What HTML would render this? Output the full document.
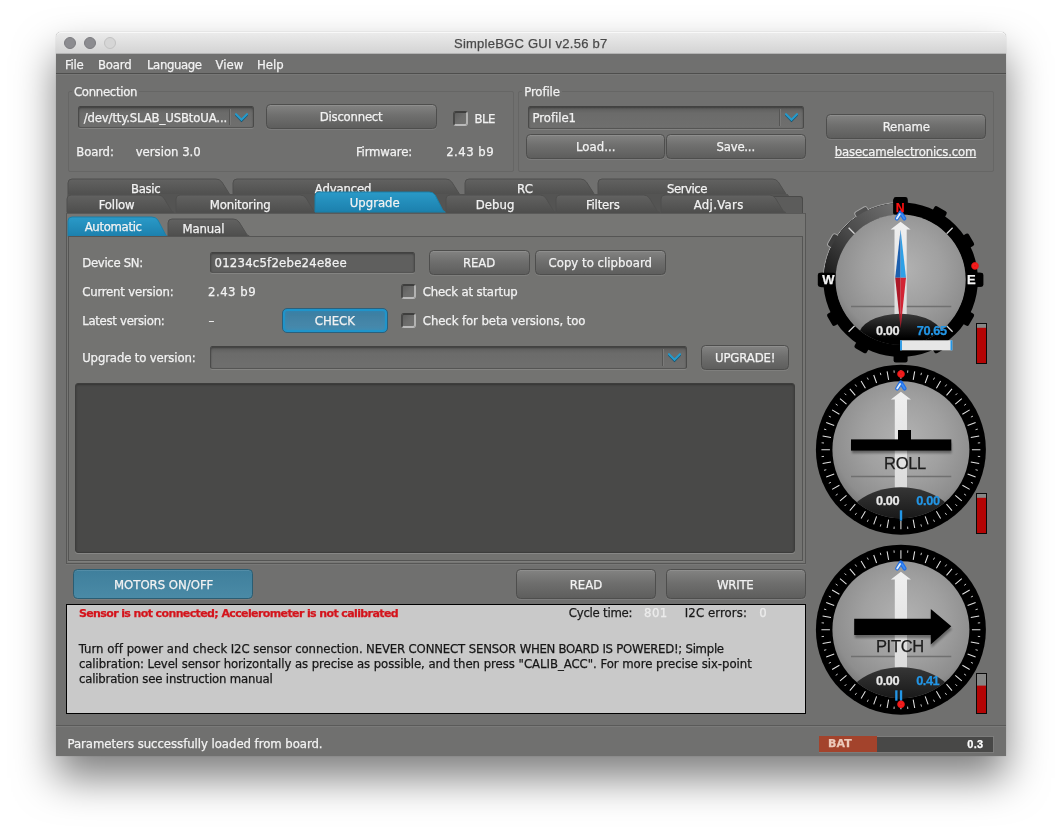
<!DOCTYPE html><html><head><meta charset="utf-8"><title>SimpleBGC GUI v2.56 b7</title><style>
*{box-sizing:border-box}
html,body{margin:0;padding:0;background:#fff;}
body{width:1062px;height:835px;overflow:hidden;position:relative;font-family:'DejaVu Sans Condensed','Liberation Sans',sans-serif;font-size:13px;color:#f2f2f2}
.win{position:absolute;left:56px;top:32px;width:950px;height:723.6px;background:#70706f;border-radius:5px 5px 0 0;box-shadow:0 0 1px rgba(0,0,0,.35),0 22px 40px rgba(0,0,0,.5);}
.tbar{position:absolute;left:0;top:0;width:950px;height:22px;border-radius:5px 5px 0 0;background:linear-gradient(#ececec,#d4d4d4);border-bottom:1px solid #b4b4b4;box-shadow:inset 0 1px 0 #f8f8f8}
.tl{position:absolute;top:5px;width:12px;height:12px;border-radius:50%;}
.abs{position:absolute}
.t{position:absolute;white-space:pre;-webkit-text-stroke:0.25px currentColor}
.txt{position:absolute;left:0;top:0;width:1062px;height:835px;z-index:5;will-change:transform}
.btn{position:absolute;border:1px solid #4e4e4d;border-radius:4.5px;background:linear-gradient(#838382,#6f6f6e 45%,#5e5e5d);box-shadow:0 1px 0 rgba(255,255,255,.09), inset 0 1px 0 rgba(255,255,255,.10)}
.btn.blue{border-color:#2a5d73;background:linear-gradient(#3f7f9c,#4a8aa6)}
.btn.chk{border:1px solid #2a607c;border-radius:5px;background:linear-gradient(#3c7c9f,#4a8cae);box-shadow:inset 0 0 0 2px #1f94ca,inset 0 0 4px 2px rgba(31,148,202,.55)}
.fs{position:absolute;border:1px solid #666665;border-radius:2px}
.lbl{position:absolute;background:#70706f;height:14px}
.combo{position:absolute;border:1px solid #4a4a49;border-top-color:#424241;border-bottom-color:#555554;border-radius:2.5px;background:linear-gradient(#5c5c5b,#6b6b6a 30%,#6f6f6e);box-shadow:0 1px 0 rgba(255,255,255,.12),inset 0 1px 2px rgba(0,0,0,.35)}
.combo i{position:absolute;right:23px;top:2px;bottom:2px;width:1px;background:#555554;box-shadow:1px 0 0 #7a7a79}
.cb{position:absolute;width:15px;height:15px;border-radius:3px;border-style:solid;border-width:2px;border-color:#3e3e3d #b2b2b1 #bababa #484847;background:linear-gradient(135deg,#5e5e5d 0,#6d6d6c 50%,#71716f)}
.tab{position:absolute;overflow:visible}
svg.g{position:absolute;left:0;top:0}
</style></head><body>
<svg width="0" height="0" style="position:absolute"><defs><linearGradient id="tg" x1="0" y1="0" x2="0" y2="1"><stop offset="0" stop-color="#626261"/><stop offset="1" stop-color="#4e4e4d"/></linearGradient><linearGradient id="tb" x1="0" y1="0" x2="0" y2="1"><stop offset="0" stop-color="#2a9ac8"/><stop offset="1" stop-color="#1c80ad"/></linearGradient></defs></svg>
<div class="win"><div class="tbar"></div>
<div class="tl" style="left:8px;background:#8c8c90;border:1px solid #7c7c80"></div><div class="tl" style="left:28px;background:#8c8c90;border:1px solid #7c7c80"></div><div class="tl" style="left:48px;background:#d6d6d6;border:1px solid #c2c2c2"></div>
</div>
<div class="abs" style="left:56px;top:73px;width:950px;height:1px;background:#4e4e4d"></div><div class="abs" style="left:56px;top:74px;width:950px;height:1px;background:#787877"></div>
<div class="fs" style="left:68px;top:91px;width:446px;height:81px"></div><div class="lbl" style="left:72px;top:85px;width:67px"></div>
<div class="fs" style="left:518px;top:91px;width:476px;height:81px"></div><div class="lbl" style="left:522px;top:85px;width:40px"></div>
<div class="combo" style="left:78px;top:106px;width:176px;height:22.4px"><i></i></div>
<svg class="abs" style="left:235px;top:113.2px;z-index:5" width="13" height="10" viewBox="0 0 13 10"><path d="M1 1.2L6.5 6.8L12 1.2" fill="none" stroke="#14506c" stroke-width="2.2" stroke-linecap="round" stroke-linejoin="miter" transform="translate(0 0.9)"/><path d="M1 1.2L6.5 6.8L12 1.2" fill="none" stroke="#259acb" stroke-width="2.1" stroke-linecap="round" stroke-linejoin="miter"/></svg>
<div class="btn" style="left:266px;top:104px;width:171px;height:25px"></div>
<div class="cb" style="left:453.3px;top:111.2px"></div>
<div class="combo" style="left:527.5px;top:106px;width:276.5px;height:23px"><i></i></div>
<svg class="abs" style="left:785px;top:113.2px;z-index:5" width="13" height="10" viewBox="0 0 13 10"><path d="M1 1.2L6.5 6.8L12 1.2" fill="none" stroke="#14506c" stroke-width="2.2" stroke-linecap="round" stroke-linejoin="miter" transform="translate(0 0.9)"/><path d="M1 1.2L6.5 6.8L12 1.2" fill="none" stroke="#259acb" stroke-width="2.1" stroke-linecap="round" stroke-linejoin="miter"/></svg>
<div class="btn" style="left:526px;top:134px;width:139px;height:25px"></div>
<div class="btn" style="left:666px;top:134px;width:140px;height:25px"></div>
<div class="btn" style="left:826px;top:114px;width:160px;height:25px"></div>
<svg class="tab" style="left:68px;top:179px;z-index:1" width="164.4" height="17" viewBox="0 0 164.4 17"><path d="M0 17V4Q0 0 4 0H147.9Q151.7 0 153.9 3L161.4 14.8Q162.5 16.5 164.2 17Z" fill="url(#tg)" stroke="#4f4f4e" stroke-width="1"/></svg>
<svg class="tab" style="left:233.2px;top:179px;z-index:1" width="229.3" height="17" viewBox="0 0 229.3 17"><path d="M0 17V4Q0 0 4 0H212.8Q216.6 0 218.8 3L226.3 14.8Q227.4 16.5 229.1 17Z" fill="url(#tg)" stroke="#4f4f4e" stroke-width="1"/></svg>
<svg class="tab" style="left:464.8px;top:179px;z-index:1" width="132.0" height="17" viewBox="0 0 132.0 17"><path d="M0 17V4Q0 0 4 0H115.5Q119.3 0 121.5 3L129.0 14.8Q130.1 16.5 131.8 17Z" fill="url(#tg)" stroke="#4f4f4e" stroke-width="1"/></svg>
<svg class="tab" style="left:597.8px;top:179px;z-index:1" width="190.9" height="17" viewBox="0 0 190.9 17"><path d="M0 17V4Q0 0 4 0H174.4Q178.2 0 180.4 3L187.9 14.8Q189.0 16.5 190.7 17Z" fill="url(#tg)" stroke="#4f4f4e" stroke-width="1"/></svg>
<div class="abs" style="left:770px;top:196px;width:33px;height:17px;background:#5c5c5b;border:1px solid #4a4a49;border-bottom:none;border-radius:0 3px 0 0;z-index:2"></div>
<div class="abs" style="left:68px;top:194px;width:720px;height:19px;background:#545453;z-index:1"></div>
<div class="txt" style="z-index:1"><div class="t" style="left:131.0px;top:179.9px;font:400 13px/17px 'DejaVu Sans Condensed','Liberation Sans',sans-serif;color:#f2f2f2;letter-spacing:-0.35px;">Basic</div>
<div class="t" style="left:314.8px;top:179.9px;font:400 13px/17px 'DejaVu Sans Condensed','Liberation Sans',sans-serif;color:#f2f2f2;letter-spacing:-0.17px;">Advanced</div>
<div class="t" style="left:516.9px;top:179.9px;font:400 13px/17px 'DejaVu Sans Condensed','Liberation Sans',sans-serif;color:#f2f2f2;letter-spacing:0.27px;">RC</div>
<div class="t" style="left:667.0px;top:179.9px;font:400 13px/17px 'DejaVu Sans Condensed','Liberation Sans',sans-serif;color:#f2f2f2;letter-spacing:-0.48px;">Service</div></div>
<svg class="tab" style="left:66.7px;top:195px;z-index:2" width="107.3" height="17.5" viewBox="0 0 107.3 17.5"><path d="M0 17.5V4Q0 0 4 0H90.8Q94.6 0 96.8 3L104.3 15.3Q105.4 17.0 107.1 17.5Z" fill="url(#tg)" stroke="#4f4f4e" stroke-width="1"/></svg>
<svg class="tab" style="left:175.5px;top:195px;z-index:2" width="140.5" height="17.5" viewBox="0 0 140.5 17.5"><path d="M0 17.5V4Q0 0 4 0H124.0Q127.8 0 130.0 3L137.5 15.3Q138.6 17.0 140.3 17.5Z" fill="url(#tg)" stroke="#4f4f4e" stroke-width="1"/></svg>
<svg class="tab" style="left:315.3px;top:192.4px;z-index:2" width="130.7" height="20.099999999999994" viewBox="0 0 130.7 20.099999999999994"><path d="M0 20.099999999999994V4Q0 0 4 0H114.2Q118.0 0 120.2 3L127.7 17.9Q128.8 19.6 130.5 20.099999999999994Z" fill="url(#tb)" stroke="#1b7fa8" stroke-width="1"/></svg>
<svg class="tab" style="left:446.2px;top:195px;z-index:2" width="110.3" height="17.5" viewBox="0 0 110.3 17.5"><path d="M0 17.5V4Q0 0 4 0H93.8Q97.6 0 99.8 3L107.3 15.3Q108.4 17.0 110.1 17.5Z" fill="url(#tg)" stroke="#4f4f4e" stroke-width="1"/></svg>
<svg class="tab" style="left:556.4px;top:195px;z-index:2" width="103.9" height="17.5" viewBox="0 0 103.9 17.5"><path d="M0 17.5V4Q0 0 4 0H87.4Q91.2 0 93.4 3L100.9 15.3Q102.0 17.0 103.7 17.5Z" fill="url(#tg)" stroke="#4f4f4e" stroke-width="1"/></svg>
<svg class="tab" style="left:661.4px;top:195px;z-index:2" width="124.8" height="17.5" viewBox="0 0 124.8 17.5"><path d="M0 17.5V4Q0 0 4 0H108.3Q112.1 0 114.3 3L121.8 15.3Q122.9 17.0 124.6 17.5Z" fill="url(#tg)" stroke="#4f4f4e" stroke-width="1"/></svg>
<div class="abs" style="left:66px;top:212.5px;width:740px;height:351.5px;border:1px solid #575756;border-top-color:#5a5a59;background:#767674;z-index:2;box-shadow:0 1px 0 rgba(255,255,255,.06)"></div>
<svg class="tab" style="left:68px;top:216.5px;z-index:3" width="100.4" height="19.5" viewBox="0 0 100.4 19.5"><path d="M0 19.5V4Q0 0 4 0H83.9Q87.7 0 89.9 3L97.4 17.3Q98.5 19.0 100.2 19.5Z" fill="url(#tb)" stroke="#1b7fa8" stroke-width="1"/></svg>
<svg class="tab" style="left:168.4px;top:218.8px;z-index:3" width="81.6" height="17.19999999999999" viewBox="0 0 81.6 17.19999999999999"><path d="M0 17.19999999999999V4Q0 0 4 0H65.1Q68.9 0 71.1 3L78.6 15.0Q79.7 16.7 81.4 17.19999999999999Z" fill="url(#tg)" stroke="#4f4f4e" stroke-width="1"/></svg>
<div class="abs" style="left:68px;top:236px;width:735.2px;height:325px;border:1px solid #555554;background:#737371;z-index:3;box-shadow:0 1px 0 rgba(255,255,255,.07)"></div>
<div class="abs" style="z-index:4;left:0;top:0">
<div class="combo" style="left:210px;top:252px;width:205px;height:20.6px;background:#5f5f5e"></div>
<div class="btn" style="left:429px;top:250px;width:101px;height:25px"></div>
<div class="btn" style="left:535px;top:250px;width:131px;height:25px"></div>
<div class="cb" style="left:401px;top:284.2px"></div>
<div class="cb" style="left:401px;top:313.4px"></div>
<div class="btn chk" style="left:282px;top:308px;width:106px;height:24.5px"></div>
<div class="combo" style="left:210px;top:346px;width:477px;height:22.5px"><i></i></div>
<svg class="abs" style="left:668px;top:353.2px;z-index:5" width="13" height="10" viewBox="0 0 13 10"><path d="M1 1.2L6.5 6.8L12 1.2" fill="none" stroke="#14506c" stroke-width="2.2" stroke-linecap="round" stroke-linejoin="miter" transform="translate(0 0.9)"/><path d="M1 1.2L6.5 6.8L12 1.2" fill="none" stroke="#259acb" stroke-width="2.1" stroke-linecap="round" stroke-linejoin="miter"/></svg>
<div class="btn" style="left:701px;top:345px;width:88px;height:25px"></div>
<div class="abs" style="left:75px;top:383.2px;width:720px;height:169.6px;background:#494948;border:1px solid #3d3d3c;border-radius:3px;box-shadow:0 1px 0 rgba(255,255,255,.15),inset 0 1px 2px rgba(0,0,0,.3)"></div>
</div>
<div class="btn blue" style="left:73px;top:569px;width:180px;height:29.5px"></div>
<div class="btn" style="left:516px;top:569px;width:140px;height:29.5px"></div>
<div class="btn" style="left:666px;top:569px;width:140px;height:29.5px"></div>
<div class="abs" style="left:66.3px;top:604.2px;width:739.4px;height:109.6px;background:#c9c9c9;border:1px solid #000"></div>
<div class="abs" style="left:56px;top:724.5px;width:950px;height:1px;background:#5a5a59"></div><div class="abs" style="left:56px;top:725.5px;width:950px;height:1px;background:#7a7a79"></div>
<div class="abs" style="left:818.5px;top:735.8px;width:175.3px;height:16.8px;background:#484847;border:1px solid #7c7c7b"></div><div class="abs" style="left:819px;top:736.3px;width:58px;height:15.8px;background:#a3432c"></div>
<svg class="g" width="1062" height="835" viewBox="0 0 1062 835">
<defs>
<radialGradient id="face" cx="0.52" cy="0.42" r="0.6"><stop offset="0" stop-color="#b2b2b2"/><stop offset="0.5" stop-color="#a0a0a0"/><stop offset="0.85" stop-color="#8e8e8e"/><stop offset="1" stop-color="#787878"/></radialGradient>
<linearGradient id="shaft" x1="0" y1="0" x2="0" y2="1"><stop offset="0" stop-color="#efefef"/><stop offset="1" stop-color="#dcdcdc"/></linearGradient>
<radialGradient id="rdot" cx="0.5" cy="0.5" r="0.5"><stop offset="0" stop-color="#d81414"/><stop offset="0.3" stop-color="#f42020"/><stop offset="0.75" stop-color="#ee1616"/><stop offset="1" stop-color="#ee1616" stop-opacity="0"/></radialGradient>
<linearGradient id="bulge" x1="0" y1="0" x2="0" y2="1"><stop offset="0" stop-color="#363636"/><stop offset="0.3" stop-color="#1c1c1c"/><stop offset="0.6" stop-color="#050505"/><stop offset="1" stop-color="#000"/></linearGradient>
<linearGradient id="fade" gradientUnits="userSpaceOnUse" x1="826" y1="275" x2="896" y2="205"><stop offset="0" stop-color="#1a1a1a"/><stop offset="0.45" stop-color="#484848"/><stop offset="1" stop-color="#707070"/></linearGradient>
<linearGradient id="bulge2" x1="0" y1="0" x2="0" y2="1"><stop offset="0" stop-color="#3a3a3a"/><stop offset="0.3" stop-color="#181818"/><stop offset="0.55" stop-color="#000"/></linearGradient>
<clipPath id="c1"><circle cx="900.6" cy="279.7" r="65.2"/></clipPath>
<filter id="sh" x="-10%" y="-30%" width="120%" height="180%"><feGaussianBlur stdDeviation="1.3"/></filter>
<clipPath id="c2"><circle cx="900.9" cy="449.7" r="68.6"/></clipPath>
<clipPath id="c3"><circle cx="900.9" cy="629.7" r="68.6"/></clipPath>
<clipPath id="q1"><path d="M900.6 279.7L810 279.7L810 190L900.6 190Z"/></clipPath>
</defs>
<g>
<rect x="893.6" y="196.89999999999998" width="14" height="10.5" rx="2.2" fill="#000" transform="rotate(0 900.6 279.7)"/>
<rect x="893.6" y="197.89999999999998" width="14" height="9.5" rx="2.2" fill="#000" transform="rotate(30 900.6 279.7)"/>
<rect x="893.6" y="197.89999999999998" width="14" height="9.5" rx="2.2" fill="#000" transform="rotate(60 900.6 279.7)"/>
<rect x="893.6" y="196.89999999999998" width="14" height="10.5" rx="2.2" fill="#000" transform="rotate(90 900.6 279.7)"/>
<rect x="893.6" y="197.89999999999998" width="14" height="9.5" rx="2.2" fill="#000" transform="rotate(120 900.6 279.7)"/>
<rect x="893.6" y="197.89999999999998" width="14" height="9.5" rx="2.2" fill="#000" transform="rotate(150 900.6 279.7)"/>
<rect x="893.6" y="196.89999999999998" width="14" height="10.5" rx="2.2" fill="#000" transform="rotate(180 900.6 279.7)"/>
<rect x="893.6" y="197.89999999999998" width="14" height="9.5" rx="2.2" fill="#000" transform="rotate(210 900.6 279.7)"/>
<rect x="893.6" y="197.89999999999998" width="14" height="9.5" rx="2.2" fill="#000" transform="rotate(240 900.6 279.7)"/>
<rect x="893.6" y="196.89999999999998" width="14" height="10.5" rx="2.2" fill="#000" transform="rotate(270 900.6 279.7)"/>
<circle cx="900.6" cy="279.7" r="70.94999999999999" fill="none" stroke="#000" stroke-width="12.700000000000003"/>
<g clip-path="url(#q1)">
<circle cx="900.6" cy="279.7" r="77.3" fill="none" stroke="#a8a8a8" stroke-width="1"/>
<rect x="893.6" y="198.39999999999998" width="14" height="9" rx="2.4" fill="#3c3c3c" stroke="#a8a8a8" stroke-width="0.9" transform="rotate(300 900.6 279.7)"/>
<rect x="893.6" y="198.39999999999998" width="14" height="9" rx="2.4" fill="#505050" stroke="#a8a8a8" stroke-width="0.9" transform="rotate(330 900.6 279.7)"/>
<circle cx="900.6" cy="279.7" r="70.69999999999999" fill="none" stroke="url(#fade)" stroke-width="12.200000000000003"/>
</g>
<rect x="893.1" y="198.2" width="14.4" height="16.900000000000002" rx="2.5" fill="#000" transform="rotate(0 900.6 279.7)"/>
<rect x="893.6" y="197.89999999999998" width="14" height="16.700000000000003" rx="2.5" fill="#000" transform="rotate(90 900.6 279.7)"/>
<rect x="893.1" y="198.2" width="14.4" height="16.900000000000002" rx="2.5" fill="#000" transform="rotate(270 900.6 279.7)"/>
<path d="M946.6 233.7L952.6 227.7" stroke="#d4d4d4" stroke-width="1.25"/>
<path d="M946.6 325.7L952.6 331.7" stroke="#d4d4d4" stroke-width="1.25"/>
<path d="M854.6 325.7L848.6 331.7" stroke="#d4d4d4" stroke-width="1.25"/>
<path d="M854.6 233.7L848.6 227.7" stroke="#d4d4d4" stroke-width="1.25"/>
</g>
<circle cx="900.6" cy="279.7" r="65.1" fill="url(#face)"/>
<path d="M851 306.5H951.3" stroke="#707070" stroke-width="1.4"/>
<path d="M900.6 221.79999999999998L910.6 229.6L906.7 229.6L906.7 317.7L894.5 317.7L894.5 229.6L890.6 229.6Z" fill="url(#shaft)"/>
<g clip-path="url(#c1)"><ellipse cx="900.6" cy="336.2" rx="42" ry="22.5" fill="url(#bulge2)"/></g>
<path d="M900.6 229.7L895.2 277.7L900.6 277.7Z" fill="#1c5fae"/><path d="M900.6 229.7L906.0 277.7L900.6 277.7Z" fill="#2ea0e6"/>
<path d="M895.2 277.7L900.6 328.2L900.6 277.7Z" fill="#ac1828"/><path d="M906.0 277.7L900.6 328.2L900.6 277.7Z" fill="#d22434"/>
<path d="M896.9 218.5L900.6 212.5L904.3000000000001 218.5" fill="none" stroke="#1f6fe6" stroke-width="4.1" stroke-linecap="round" stroke-linejoin="round"/><path d="M896.9 218.5L899.8000000000001 214.1" fill="none" stroke="#dff0ff" stroke-width="1.9" stroke-linecap="round"/><path d="M901.8000000000001 214.3L904.3000000000001 218.5" fill="none" stroke="#3f8ef4" stroke-width="1.6" stroke-linecap="round"/>
<rect x="900.1" y="340.3" width="52.2" height="10" fill="#e6e6e6"/><rect x="900.1" y="340.3" width="1.8" height="10" fill="#2396e6"/><rect x="950.5" y="340.3" width="1.8" height="10" fill="#2396e6"/>
<circle cx="975" cy="265.9" r="4.3" fill="url(#rdot)"/>
<rect x="976.5" y="323.5" width="10" height="40" fill="#868685" stroke="#0a0a0a" stroke-width="1"/><rect x="977" y="327.8" width="9" height="35.19999999999999" fill="#b40505"/>
<circle cx="900.9" cy="449.7" r="85" fill="#000"/>
<circle cx="900.9" cy="449.7" r="68.5" fill="url(#face)"/>
<path d="M851 476.5H951.3" stroke="#707070" stroke-width="1.4"/>
<path d="M900.9 391.8L910.9 399.59999999999997L907.0 399.59999999999997L907.0 487.7L894.8 487.7L894.8 399.59999999999997L890.9 399.59999999999997Z" fill="url(#shaft)"/>
<rect x="852" y="442.7" width="99.5" height="10.5" fill="#000" opacity="0.38" filter="url(#sh)"/>
<rect x="851" y="439.4" width="100.3" height="11.2" fill="#000"/><rect x="898" y="430.0" width="13" height="10" fill="#000"/>
<g clip-path="url(#c2)"><ellipse cx="900.9" cy="533.7" rx="60" ry="46.5" fill="url(#bulge)"/></g>
<path d="M900.9 378.7L900.9 370.2M913.2 379.8L914.7 371.4M925.2 383.0L928.1 375.0M936.4 388.2L940.6 380.9M946.5 395.3L952.0 388.8M955.3 404.1L961.8 398.6M962.4 414.2L969.7 409.9M967.6 425.4L975.6 422.5M970.8 437.4L979.2 435.9M971.9 449.7L980.4 449.7M970.8 462.0L979.2 463.5M967.6 474.0L975.6 476.9M962.4 485.2L969.7 489.4M955.3 495.3L961.8 500.8M946.5 504.1L952.0 510.6M936.4 511.2L940.6 518.5M925.2 516.4L928.1 524.4M913.2 519.6L914.7 528.0M900.9 520.7L900.9 529.2M888.6 519.6L887.1 528.0M876.6 516.4L873.7 524.4M865.4 511.2L861.1 518.5M855.3 504.1L849.8 510.6M846.5 495.3L840.0 500.8M839.4 485.2L832.1 489.4M834.2 474.0L826.2 476.9M831.0 462.0L822.6 463.5M829.9 449.7L821.4 449.7M831.0 437.4L822.6 435.9M834.2 425.4L826.2 422.5M839.4 414.2L832.1 409.9M846.5 404.1L840.0 398.6M855.3 395.3L849.8 388.8M865.4 388.2L861.1 380.9M876.6 383.0L873.7 375.0M888.6 379.8L887.1 371.4" stroke="#e0e0e0" stroke-width="1.05" fill="none"/><path d="M907.6 372.8L907.8 370.4M920.9 375.1L921.5 372.8M933.5 379.7L934.5 377.6M945.2 386.5L946.6 384.5M955.5 395.1L957.2 393.4M964.1 405.4L966.1 404.0M970.9 417.1L973.0 416.1M975.5 429.7L977.8 429.1M977.8 443.0L980.2 442.8M977.8 456.4L980.2 456.6M975.5 469.7L977.8 470.3M970.9 482.3L973.0 483.3M964.1 494.0L966.1 495.4M955.5 504.3L957.2 506.0M945.2 512.9L946.6 514.9M933.5 519.7L934.5 521.8M920.9 524.3L921.5 526.6M907.6 526.6L907.8 529.0M894.2 526.6L894.0 529.0M880.9 524.3L880.3 526.6M868.3 519.7L867.3 521.8M856.6 512.9L855.2 514.9M846.3 504.3L844.6 506.0M837.7 494.0L835.7 495.4M830.9 482.3L828.8 483.3M826.3 469.7L824.0 470.3M824.0 456.4L821.6 456.6M824.0 443.0L821.6 442.8M826.3 429.7L824.0 429.1M830.9 417.1L828.8 416.1M837.7 405.4L835.7 404.0M846.3 395.1L844.6 393.4M856.6 386.5L855.2 384.5M868.3 379.7L867.3 377.6M880.9 375.1L880.3 372.8M894.2 372.8L894.0 370.4" stroke="#c4c4c4" stroke-width="1" fill="none"/>
<path d="M897.1999999999999 388.5L900.9 382.5L904.6 388.5" fill="none" stroke="#1f6fe6" stroke-width="4.1" stroke-linecap="round" stroke-linejoin="round"/><path d="M897.1999999999999 388.5L900.1 384.1" fill="none" stroke="#dff0ff" stroke-width="1.9" stroke-linecap="round"/><path d="M902.1 384.3L904.6 388.5" fill="none" stroke="#3f8ef4" stroke-width="1.6" stroke-linecap="round"/>
<circle cx="901" cy="374" r="4.3" fill="url(#rdot)"/>
<rect x="899.8" y="510.3" width="2.4" height="10.4" fill="#2396e6"/>
<rect x="976.5" y="493.5" width="10" height="40" fill="#868685" stroke="#0a0a0a" stroke-width="1"/><rect x="977" y="497.8" width="9" height="35.19999999999999" fill="#b40505"/>
<circle cx="900.9" cy="629.7" r="85" fill="#000"/>
<circle cx="900.9" cy="629.7" r="68.5" fill="url(#face)"/>
<path d="M851 656.5H951.3" stroke="#707070" stroke-width="1.4"/>
<path d="M900.9 571.8000000000001L910.9 579.6L907.0 579.6L907.0 667.7L894.8 667.7L894.8 579.6L890.9 579.6Z" fill="url(#shaft)"/>
<path d="M855 621.7H931.5V612.0L952 629.3000000000001L931.5 647.6V637.9000000000001H855Z" fill="#000" opacity="0.35" filter="url(#sh)"/>
<path d="M854.2 618.7H930.8V609.0L951.3 626.3000000000001L930.8 644.6V634.9000000000001H854.2Z" fill="#000"/>
<g clip-path="url(#c3)"><ellipse cx="900.9" cy="713.7" rx="60" ry="46.5" fill="url(#bulge)"/></g>
<path d="M900.9 558.7L900.9 550.2M913.2 559.8L914.7 551.4M925.2 563.0L928.1 555.0M936.4 568.2L940.6 560.9M946.5 575.3L952.0 568.8M955.3 584.1L961.8 578.6M962.4 594.2L969.7 590.0M967.6 605.4L975.6 602.5M970.8 617.4L979.2 615.9M971.9 629.7L980.4 629.7M970.8 642.0L979.2 643.5M967.6 654.0L975.6 656.9M962.4 665.2L969.7 669.5M955.3 675.3L961.8 680.8M946.5 684.1L952.0 690.6M936.4 691.2L940.6 698.5M925.2 696.4L928.1 704.4M913.2 699.6L914.7 708.0M900.9 700.7L900.9 709.2M888.6 699.6L887.1 708.0M876.6 696.4L873.7 704.4M865.4 691.2L861.1 698.5M855.3 684.1L849.8 690.6M846.5 675.3L840.0 680.8M839.4 665.2L832.1 669.5M834.2 654.0L826.2 656.9M831.0 642.0L822.6 643.5M829.9 629.7L821.4 629.7M831.0 617.4L822.6 615.9M834.2 605.4L826.2 602.5M839.4 594.2L832.1 590.0M846.5 584.1L840.0 578.6M855.3 575.3L849.8 568.8M865.4 568.2L861.1 560.9M876.6 563.0L873.7 555.0M888.6 559.8L887.1 551.4" stroke="#e0e0e0" stroke-width="1.05" fill="none"/><path d="M907.6 552.8L907.8 550.4M920.9 555.1L921.5 552.8M933.5 559.7L934.5 557.6M945.2 566.5L946.6 564.5M955.5 575.1L957.2 573.4M964.1 585.4L966.1 584.0M970.9 597.1L973.0 596.1M975.5 609.7L977.8 609.1M977.8 623.0L980.2 622.8M977.8 636.4L980.2 636.6M975.5 649.7L977.8 650.3M970.9 662.3L973.0 663.3M964.1 674.0L966.1 675.4M955.5 684.3L957.2 686.0M945.2 692.9L946.6 694.9M933.5 699.7L934.5 701.8M920.9 704.3L921.5 706.6M907.6 706.6L907.8 709.0M894.2 706.6L894.0 709.0M880.9 704.3L880.3 706.6M868.3 699.7L867.3 701.8M856.6 692.9L855.2 694.9M846.3 684.3L844.6 686.0M837.7 674.0L835.7 675.4M830.9 662.3L828.8 663.3M826.3 649.7L824.0 650.3M824.0 636.4L821.6 636.6M824.0 623.0L821.6 622.8M826.3 609.7L824.0 609.1M830.9 597.1L828.8 596.1M837.7 585.4L835.7 584.0M846.3 575.1L844.6 573.4M856.6 566.5L855.2 564.5M868.3 559.7L867.3 557.6M880.9 555.1L880.3 552.8M894.2 552.8L894.0 550.4" stroke="#c4c4c4" stroke-width="1" fill="none"/>
<path d="M897.1999999999999 568.5L900.9 562.5L904.6 568.5" fill="none" stroke="#1f6fe6" stroke-width="4.1" stroke-linecap="round" stroke-linejoin="round"/><path d="M897.1999999999999 568.5L900.1 564.1" fill="none" stroke="#dff0ff" stroke-width="1.9" stroke-linecap="round"/><path d="M902.1 564.3L904.6 568.5" fill="none" stroke="#3f8ef4" stroke-width="1.6" stroke-linecap="round"/>
<rect x="895.2" y="690.3" width="2.3" height="10.4" fill="#2396e6"/><rect x="899.9" y="690.3" width="2.3" height="10.4" fill="#2396e6"/>
<circle cx="901" cy="704.3" r="4.3" fill="url(#rdot)"/>
<rect x="976.5" y="673.5" width="10" height="40" fill="#868685" stroke="#0a0a0a" stroke-width="1"/><rect x="977" y="685.6" width="9" height="27.399999999999977" fill="#b40505"/>
</svg>
<div class="txt"><div class="t" style="left:454.0px;top:34.8px;font:400 13px/17px 'Liberation Sans',sans-serif;color:#4a4a4a;letter-spacing:0.24px;">SimpleBGC GUI v2.56 b7</div>
<div class="t" style="left:65.0px;top:55.7px;font:400 13px/17px 'DejaVu Sans Condensed','Liberation Sans',sans-serif;color:#f2f2f2;letter-spacing:-0.25px;">File</div>
<div class="t" style="left:98.0px;top:55.7px;font:400 13px/17px 'DejaVu Sans Condensed','Liberation Sans',sans-serif;color:#f2f2f2;letter-spacing:-0.17px;">Board</div>
<div class="t" style="left:147.0px;top:55.7px;font:400 13px/17px 'DejaVu Sans Condensed','Liberation Sans',sans-serif;color:#f2f2f2;letter-spacing:-0.40px;">Language</div>
<div class="t" style="left:215.5px;top:55.7px;font:400 13px/17px 'DejaVu Sans Condensed','Liberation Sans',sans-serif;color:#f2f2f2;letter-spacing:0.07px;">View</div>
<div class="t" style="left:257.1px;top:55.7px;font:400 13px/17px 'DejaVu Sans Condensed','Liberation Sans',sans-serif;color:#f2f2f2;letter-spacing:-0.07px;">Help</div>
<div class="t" style="left:74.0px;top:82.8px;font:400 13px/17px 'DejaVu Sans Condensed','Liberation Sans',sans-serif;color:#f2f2f2;letter-spacing:-0.30px;">Connection</div>
<div class="t" style="left:524.2px;top:83.0px;font:400 13px/17px 'DejaVu Sans Condensed','Liberation Sans',sans-serif;color:#f2f2f2;letter-spacing:-0.09px;">Profile</div>
<div class="t" style="left:83.7px;top:108.8px;font:400 13px/17px 'DejaVu Sans Condensed','Liberation Sans',sans-serif;color:#f2f2f2;letter-spacing:-0.14px;">/dev/tty.SLAB_USBtoUA...</div>
<div class="t" style="left:319.8px;top:108.0px;font:400 13px/17px 'DejaVu Sans Condensed','Liberation Sans',sans-serif;color:#f2f2f2;letter-spacing:-0.24px;">Disconnect</div>
<div class="t" style="left:474.5px;top:109.8px;font:400 13px/17px 'DejaVu Sans Condensed','Liberation Sans',sans-serif;color:#f2f2f2;letter-spacing:-0.48px;">BLE</div>
<div class="t" style="left:76.3px;top:142.7px;font:400 13px/17px 'DejaVu Sans Condensed','Liberation Sans',sans-serif;color:#f2f2f2;letter-spacing:-0.15px;">Board:</div>
<div class="t" style="left:135.7px;top:142.7px;font:400 13px/17px 'DejaVu Sans Condensed','Liberation Sans',sans-serif;color:#f2f2f2;letter-spacing:-0.01px;">version 3.0</div>
<div class="t" style="left:355.9px;top:142.9px;font:400 13px/17px 'DejaVu Sans Condensed','Liberation Sans',sans-serif;color:#f2f2f2;letter-spacing:-0.13px;">Firmware:</div>
<div class="t" style="left:446.2px;top:142.9px;font:400 13px/17px 'DejaVu Sans Condensed','Liberation Sans',sans-serif;color:#f2f2f2;letter-spacing:0.48px;">2.43 b9</div>
<div class="t" style="left:532.5px;top:108.5px;font:400 13px/17px 'DejaVu Sans Condensed','Liberation Sans',sans-serif;color:#f2f2f2;letter-spacing:-0.03px;">Profile1</div>
<div class="t" style="left:575.9px;top:137.8px;font:400 13px/17px 'DejaVu Sans Condensed','Liberation Sans',sans-serif;color:#f2f2f2;letter-spacing:0.06px;">Load...</div>
<div class="t" style="left:716.5px;top:137.8px;font:400 13px/17px 'DejaVu Sans Condensed','Liberation Sans',sans-serif;color:#f2f2f2;letter-spacing:-0.21px;">Save...</div>
<div class="t" style="left:882.7px;top:118.0px;font:400 13px/17px 'DejaVu Sans Condensed','Liberation Sans',sans-serif;color:#f2f2f2;letter-spacing:-0.15px;">Rename</div>
<div class="t" style="left:834.7px;top:142.8px;font:400 13px/17px 'DejaVu Sans Condensed','Liberation Sans',sans-serif;color:#f2f2f2;letter-spacing:-0.16px;text-decoration:underline;text-underline-offset:1px;">basecamelectronics.com</div>
<div class="t" style="left:98.7px;top:195.6px;font:400 13px/17px 'DejaVu Sans Condensed','Liberation Sans',sans-serif;color:#f2f2f2;letter-spacing:-0.14px;z-index:3;">Follow</div>
<div class="t" style="left:209.8px;top:195.6px;font:400 13px/17px 'DejaVu Sans Condensed','Liberation Sans',sans-serif;color:#f2f2f2;letter-spacing:-0.18px;z-index:3;">Monitoring</div>
<div class="t" style="left:349.8px;top:193.9px;font:400 13px/17px 'DejaVu Sans Condensed','Liberation Sans',sans-serif;color:#f2f2f2;letter-spacing:-0.02px;z-index:3;">Upgrade</div>
<div class="t" style="left:475.7px;top:195.6px;font:400 13px/17px 'DejaVu Sans Condensed','Liberation Sans',sans-serif;color:#f2f2f2;letter-spacing:0.06px;z-index:3;">Debug</div>
<div class="t" style="left:585.9px;top:195.6px;font:400 13px/17px 'DejaVu Sans Condensed','Liberation Sans',sans-serif;color:#f2f2f2;letter-spacing:-0.17px;z-index:3;">Filters</div>
<div class="t" style="left:693.7px;top:195.6px;font:400 13px/17px 'DejaVu Sans Condensed','Liberation Sans',sans-serif;color:#f2f2f2;letter-spacing:0.35px;z-index:3;">Adj.Vars</div>
<div class="t" style="left:84.7px;top:218.0px;font:400 13px/17px 'DejaVu Sans Condensed','Liberation Sans',sans-serif;color:#f2f2f2;letter-spacing:-0.33px;">Automatic</div>
<div class="t" style="left:182.5px;top:219.8px;font:400 13px/17px 'DejaVu Sans Condensed','Liberation Sans',sans-serif;color:#f2f2f2;letter-spacing:-0.12px;">Manual</div>
<div class="t" style="left:82.2px;top:253.9px;font:400 13px/17px 'DejaVu Sans Condensed','Liberation Sans',sans-serif;color:#f2f2f2;letter-spacing:-0.31px;">Device SN:</div>
<div class="t" style="left:214.5px;top:253.9px;font:400 13px/17px 'DejaVu Sans Condensed','Liberation Sans',sans-serif;color:#f2f2f2;letter-spacing:0.22px;">01234c5f2ebe24e8ee</div>
<div class="t" style="left:463.0px;top:253.9px;font:400 13px/17px 'DejaVu Sans Condensed','Liberation Sans',sans-serif;color:#f2f2f2;letter-spacing:-0.11px;">READ</div>
<div class="t" style="left:548.5px;top:253.7px;font:400 13px/17px 'DejaVu Sans Condensed','Liberation Sans',sans-serif;color:#f2f2f2;letter-spacing:0.03px;">Copy to clipboard</div>
<div class="t" style="left:82.2px;top:283.0px;font:400 13px/17px 'DejaVu Sans Condensed','Liberation Sans',sans-serif;color:#f2f2f2;letter-spacing:-0.19px;">Current version:</div>
<div class="t" style="left:208.0px;top:283.0px;font:400 13px/17px 'DejaVu Sans Condensed','Liberation Sans',sans-serif;color:#f2f2f2;letter-spacing:0.50px;">2.43 b9</div>
<div class="t" style="left:422.8px;top:283.0px;font:400 13px/17px 'DejaVu Sans Condensed','Liberation Sans',sans-serif;color:#f2f2f2;letter-spacing:-0.16px;">Check at startup</div>
<div class="t" style="left:82.2px;top:311.6px;font:400 13px/17px 'DejaVu Sans Condensed','Liberation Sans',sans-serif;color:#f2f2f2;letter-spacing:-0.29px;">Latest version:</div>
<div class="t" style="left:208.5px;top:311.6px;font:400 13px/17px 'DejaVu Sans Condensed','Liberation Sans',sans-serif;color:#f2f2f2;letter-spacing:0.14px;">–</div>
<div class="t" style="left:314.8px;top:312.0px;font:400 13px/17px 'DejaVu Sans Condensed','Liberation Sans',sans-serif;color:#f2f2f2;letter-spacing:-0.02px;">CHECK</div>
<div class="t" style="left:422.8px;top:312.2px;font:400 13px/17px 'DejaVu Sans Condensed','Liberation Sans',sans-serif;color:#f2f2f2;letter-spacing:-0.08px;">Check for beta versions, too</div>
<div class="t" style="left:82.2px;top:349.2px;font:400 13px/17px 'DejaVu Sans Condensed','Liberation Sans',sans-serif;color:#f2f2f2;letter-spacing:-0.14px;">Upgrade to version:</div>
<div class="t" style="left:715.0px;top:349.0px;font:400 13px/17px 'DejaVu Sans Condensed','Liberation Sans',sans-serif;color:#f2f2f2;letter-spacing:-0.13px;">UPGRADE!</div>
<div class="t" style="left:114.0px;top:576.0px;font:400 13px/17px 'DejaVu Sans Condensed','Liberation Sans',sans-serif;color:#f2f2f2;letter-spacing:-0.01px;">MOTORS ON/OFF</div>
<div class="t" style="left:569.7px;top:576.2px;font:400 13px/17px 'DejaVu Sans Condensed','Liberation Sans',sans-serif;color:#f2f2f2;letter-spacing:0.02px;">READ</div>
<div class="t" style="left:717.0px;top:576.2px;font:400 13px/17px 'DejaVu Sans Condensed','Liberation Sans',sans-serif;color:#f2f2f2;letter-spacing:-0.23px;">WRITE</div>
<div class="t" style="left:78.9px;top:607.3px;font:700 11px/14px 'DejaVu Sans','Liberation Sans',sans-serif;color:#d4141c;letter-spacing:-0.61px;">Sensor is not connected; Accelerometer is not calibrated</div>
<div class="t" style="left:568.8px;top:603.9px;font:400 13px/17px 'DejaVu Sans Condensed','Liberation Sans',sans-serif;color:#1a1a1a;letter-spacing:-0.24px;">Cycle time:</div>
<div class="t" style="left:644.1px;top:603.9px;font:400 13px/17px 'DejaVu Sans Condensed','Liberation Sans',sans-serif;color:#ececec;letter-spacing:0.42px;">801</div>
<div class="t" style="left:684.8px;top:603.9px;font:400 13px/17px 'DejaVu Sans Condensed','Liberation Sans',sans-serif;color:#1a1a1a;letter-spacing:0.10px;">I2C errors:</div>
<div class="t" style="left:759.2px;top:603.9px;font:400 13px/17px 'DejaVu Sans Condensed','Liberation Sans',sans-serif;color:#ececec;letter-spacing:-0.45px;">0</div>
<div class="t" style="left:78.8px;top:639.8px;font:400 13px/17px 'DejaVu Sans Condensed','Liberation Sans',sans-serif;color:#161616;letter-spacing:0.05px;">Turn off power and check </div>
<div class="t" style="left:230.7px;top:639.8px;font:400 13px/17px 'DejaVu Sans Condensed','Liberation Sans',sans-serif;color:#161616;letter-spacing:-0.07px;">I2C sensor connection. </div>
<div class="t" style="left:366.1px;top:639.8px;font:400 13px/17px 'DejaVu Sans Condensed','Liberation Sans',sans-serif;color:#161616;letter-spacing:-0.15px;">NEVER CONNECT SENSOR </div>
<div class="t" style="left:519.7px;top:639.8px;font:400 13px/17px 'DejaVu Sans Condensed','Liberation Sans',sans-serif;color:#161616;letter-spacing:-0.28px;">WHEN BOARD IS POWERED!; </div>
<div class="t" style="left:685.5px;top:639.8px;font:400 13px/17px 'DejaVu Sans Condensed','Liberation Sans',sans-serif;color:#161616;letter-spacing:-0.28px;">Simple</div>
<div class="t" style="left:78.9px;top:654.9px;font:400 13px/17px 'DejaVu Sans Condensed','Liberation Sans',sans-serif;color:#161616;letter-spacing:-0.07px;">calibration: Level sensor horizontally as precise as possible, and </div>
<div class="t" style="left:453.5px;top:654.9px;font:400 13px/17px 'DejaVu Sans Condensed','Liberation Sans',sans-serif;color:#161616;letter-spacing:-0.03px;">then press "CALIB_ACC". For more precise six-point</div>
<div class="t" style="left:78.9px;top:669.9px;font:400 13px/17px 'DejaVu Sans Condensed','Liberation Sans',sans-serif;color:#161616;letter-spacing:-0.18px;">calibration see instruction manual</div>
<div class="t" style="left:67.5px;top:734.6px;font:400 13px/17px 'DejaVu Sans Condensed','Liberation Sans',sans-serif;color:#f2f2f2;letter-spacing:-0.04px;">Parameters successfully loaded from board.</div>
<div class="t" style="left:828.1px;top:737.0px;font:700 11px/14px 'DejaVu Sans','Liberation Sans',sans-serif;color:#ecc9ba;letter-spacing:0.02px;">BAT</div>
<div class="t" style="left:967.2px;top:737.0px;font:700 11px/14px 'Liberation Sans',sans-serif;color:#ffffff;letter-spacing:0.37px;">0.3</div>
<div class="t" style="left:895.7px;top:199.6px;font:700 12.2px/16px 'Liberation Sans',sans-serif;color:#ff1010;letter-spacing:0.29px;">N</div>
<div class="t" style="left:822.3px;top:271.0px;font:700 13px/17px 'Liberation Sans',sans-serif;color:#f4f4f4;letter-spacing:0.12px;">W</div>
<div class="t" style="left:967.0px;top:271.0px;font:700 13px/17px 'Liberation Sans',sans-serif;color:#f4f4f4;letter-spacing:0.03px;">E</div>
<div class="t" style="left:875.9px;top:321.6px;font:700 12.8px/17px 'Liberation Sans',sans-serif;color:#e8e8e8;letter-spacing:-0.36px;">0.00</div>
<div class="t" style="left:916.7px;top:321.6px;font:700 12.8px/17px 'Liberation Sans',sans-serif;color:#2396e6;letter-spacing:-0.39px;">70.65</div>
<div class="t" style="left:884.1px;top:453.0px;font:400 16.5px/21px 'Liberation Sans',sans-serif;color:#1c1c1c;letter-spacing:-0.33px;">ROLL</div>
<div class="t" style="left:875.9px;top:491.6px;font:700 12.8px/17px 'Liberation Sans',sans-serif;color:#e8e8e8;letter-spacing:-0.36px;">0.00</div>
<div class="t" style="left:916.2px;top:491.6px;font:700 12.8px/17px 'Liberation Sans',sans-serif;color:#2396e6;letter-spacing:-0.31px;">0.00</div>
<div class="t" style="left:875.9px;top:636.0px;font:400 16.5px/21px 'Liberation Sans',sans-serif;color:#1c1c1c;letter-spacing:-0.30px;">PITCH</div>
<div class="t" style="left:875.9px;top:671.6px;font:700 12.8px/17px 'Liberation Sans',sans-serif;color:#e8e8e8;letter-spacing:-0.36px;">0.00</div>
<div class="t" style="left:916.2px;top:671.6px;font:700 12.8px/17px 'Liberation Sans',sans-serif;color:#2396e6;letter-spacing:-0.48px;">0.41</div></div>
</body></html>
